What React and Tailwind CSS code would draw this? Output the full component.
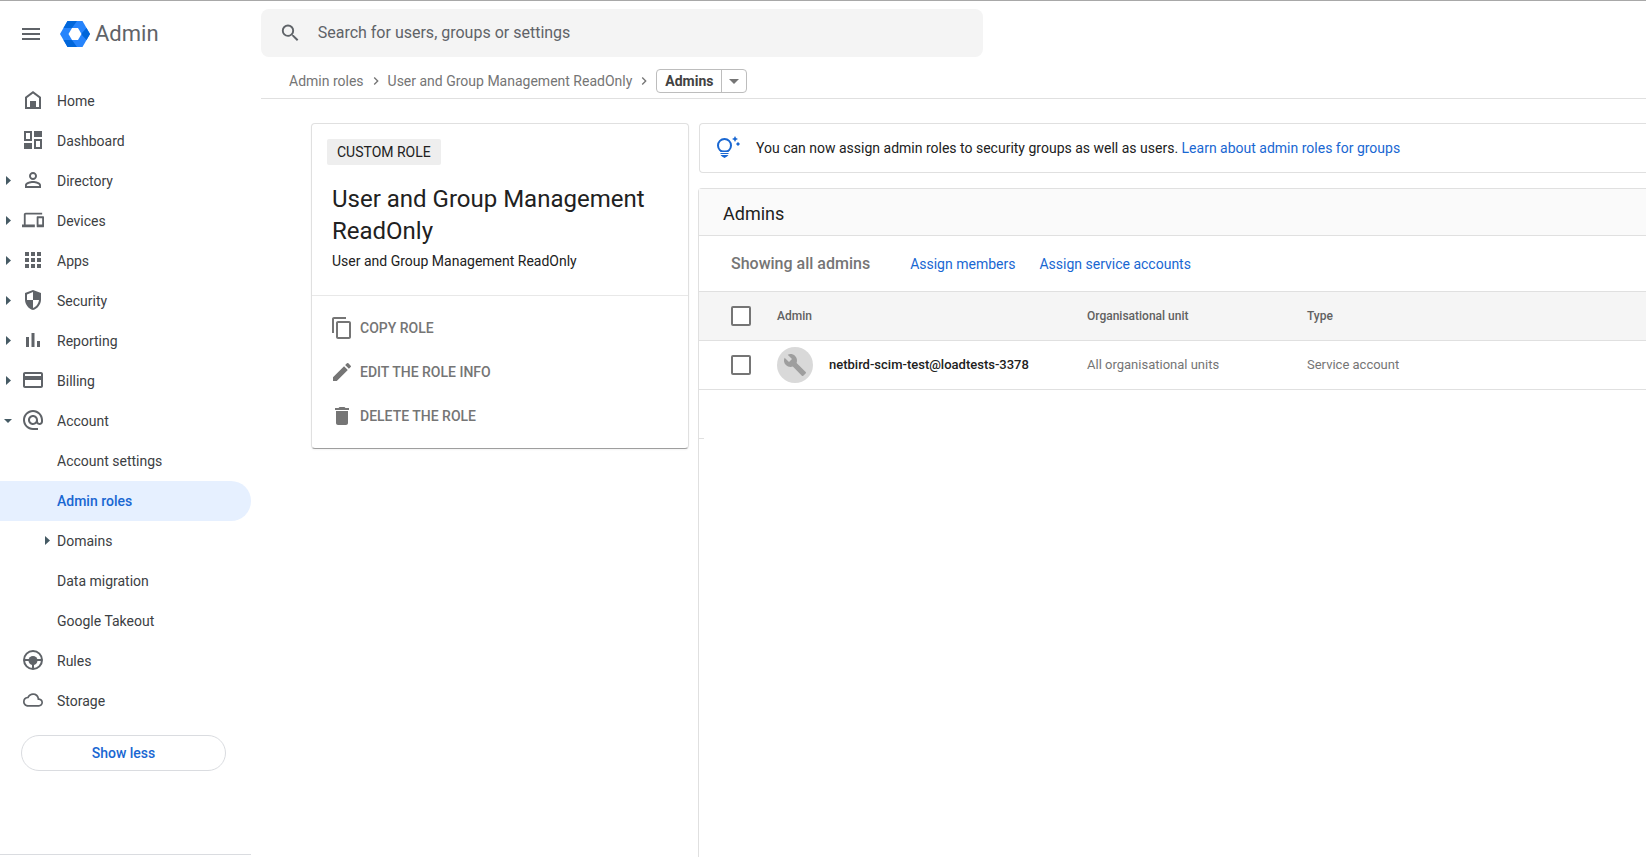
import React, { useState } from "react";
import {
  MdAlternateEmail,
  MdApps,
  MdArrowDropDown,
  MdBuild,
  MdChevronRight,
  MdCloudQueue,
  MdContentCopy,
  MdCreditCard,
  MdDelete,
  MdDevices,
  MdEdit,
  MdMenu,
  MdPersonOutline,
  MdSearch,
} from "react-icons/md";

const HomeIcon = () => (
  <svg width="20" height="20" viewBox="0 0 20 20" fill="currentColor" aria-hidden="true">
    <path d="M10 1 2 7v12h16V7l-8-6Zm6 16H4V8l6-4.500 6 4.500v9Z" />
    <path d="M7 11h6v7H7z" />
  </svg>
);

const DashboardIcon = () => (
  <svg width="20" height="20" viewBox="0 0 20 20" fill="currentColor" aria-hidden="true">
    <path d="M1 1h8v10H1V1Zm2 2v6h4V3H3ZM11 1h8v6h-8zM1 13h8v6H1zM11 9h8v10h-8V9Zm2 2v6h4v-6h-4Z" />
  </svg>
);

const ShieldIcon = () => (
  <svg width="20" height="20" viewBox="0 0 20 20" fill="currentColor" aria-hidden="true">
    <path d="M10 0 2 3v6.5C2 14.3 5.400 18.800 10 20c4.600-1.200 8-5.700 8-10.500V3l-8-3Zm0 2.100V10h6c-.4 3.600-2.900 6.900-6 7.900V10H4V4.400l6-2.300Z" />
  </svg>
);

const ReportIcon = () => (
  <svg width="20" height="20" viewBox="0 0 20 20" fill="currentColor" aria-hidden="true">
    <path d="M3 7h3v10H3zM8.500 3h3v14h-3zM14 11h3v6h-3z" />
  </svg>
);

const RulesIcon = () => (
  <svg width="20" height="20" viewBox="0 0 20 20" fill="none" stroke="currentColor" strokeWidth="2" aria-hidden="true">
    <circle cx="10" cy="10" r="9" />
    <path d="M1 10h18M10 10v9" />
    <circle cx="10" cy="10.5" r="4.5" fill="currentColor" stroke="none" />
  </svg>
);

const AdminLogo = () => (
  <svg width="30" height="28" viewBox="0 0 30 28" aria-hidden="true">
    <path fill="#2684fc" d="M7.500 1h15L30 14l-7.500 13h-15L0 14 7.500 1Z" />
    <path fill="#0066da" d="M7.500 1H17l-5 7H3.500L7.500 1ZM26.500 8 30 14l-3.500 6L21 14l5.500-6ZM3.500 20H12l5 7H7.500l-4-7Z" />
    <path fill="#fff" d="M12 8h6l3.500 6-3.500 6h-6l-3.500-6L12 8Z" />
  </svg>
);

const BulbIcon = () => (
  <svg width="24" height="24" viewBox="0 0 24 24" fill="#1967d2" aria-hidden="true">
    <circle cx="8.5" cy="9.5" r="6.5" fill="none" stroke="#1967d2" strokeWidth="2" />
    <path d="M4.500 14.500h8V18h-8zM4.500 19h8l-1.500 1.500L8.500 22 6 20.500z" />
    <path d="M4 16.500h9" stroke="#fff" strokeWidth="1" />
    <path d="m19 0 1 2 2 1-2 1-1 2-1-2-2-1 2-1zM22 6l2 2-2 2-2-2z" />
  </svg>
);

const NAV_ITEMS = [
  { label: "Home", icon: HomeIcon },
  { label: "Dashboard", icon: DashboardIcon },
  { label: "Directory", icon: MdPersonOutline, size: 24, arrow: true },
  { label: "Devices", icon: MdDevices, size: 22, arrow: true },
  { label: "Apps", icon: MdApps, size: 24, arrow: true },
  { label: "Security", icon: ShieldIcon, arrow: true },
  { label: "Reporting", icon: ReportIcon, arrow: true },
  { label: "Billing", icon: MdCreditCard, size: 24, arrow: true },
  { label: "Account", icon: MdAlternateEmail, size: 24, open: true },
  { label: "Account settings", child: true },
  { label: "Admin roles", child: true, active: true },
  { label: "Domains", child: true, arrow: true },
  { label: "Data migration", child: true },
  { label: "Google Takeout", child: true },
  { label: "Rules", icon: RulesIcon },
  { label: "Storage", icon: MdCloudQueue, size: 20 },
];

const ACTIONS = [
  { label: "COPY ROLE", icon: MdContentCopy },
  { label: "EDIT THE ROLE INFO", icon: MdEdit },
  { label: "DELETE THE ROLE", icon: MdDelete },
];

const ADMINS = [
  {
    name: "netbird-scim-test@loadtests-3378",
    unit: "All organisational units",
    type: "Service account",
  },
];

const NavArrow = ({ open }) => (
  <svg width="8" height="10" viewBox="0 0 8 10" fill="#455a64" aria-hidden="true">
    <path d={open ? "M0 3h8L4 7z" : "M2 0v9l5-4.500z"} />
  </svg>
);

const NavItem = ({ item }) => {
  const Icon = item.icon;
  return (
    <li>
      <a
        href="#"
        aria-current={item.active ? "page" : undefined}
        className={
          item.active
            ? "flex h-10 items-center rounded-r-full bg-[#e6f0ff] text-sm font-medium text-[#1967d2]"
            : "flex h-10 items-center text-sm text-[#3c4043]"
        }
      >
        <span
          className={
            item.child
              ? "flex w-[57px] shrink-0 justify-end pr-1.5"
              : "flex w-[57px] shrink-0 items-center gap-[9px] pl-1"
          }
        >
          {item.child ? (
            item.arrow && <NavArrow />
          ) : (
            <>
              <span className="w-2">{(item.arrow || item.open) && <NavArrow open={item.open} />}</span>
              <span className="flex w-6 shrink-0 justify-center pb-0.5 text-[#5f6368]">
                <Icon size={item.size} />
              </span>
            </>
          )}
        </span>
        {item.label}
      </a>
    </li>
  );
};

const Sidebar = () => (
  <aside className="flex w-[251px] shrink-0 flex-col border-b border-[#dadce0]">
    <div className="flex h-20 items-center pb-3.5 pl-[19px]">
      <button aria-label="Main menu" className="text-[#5f6368]">
        <MdMenu size={24} />
      </button>
      <a href="#" className="ml-[17px] flex items-center gap-[5px] text-[22px] leading-7 text-[#5f6368]">
        <AdminLogo />
        Admin
      </a>
    </div>
    <nav aria-label="Main">
      <ul>
        {NAV_ITEMS.map((item) => (
          <NavItem key={item.label} item={item} />
        ))}
      </ul>
    </nav>
    <button className="mt-3.5 mr-[25px] ml-[21px] h-9 rounded-full border border-[#dadce0] text-sm font-medium text-[#1967d2]">
      Show less
    </button>
  </aside>
);

const Breadcrumbs = () => (
  <nav
    aria-label="Breadcrumb"
    className="mt-2 flex h-[34px] items-center border-b border-[#e0e0e0] pb-px pl-7 text-sm text-[#757575]"
  >
    <a href="#">Admin roles</a>
    <MdChevronRight size={16} className="mx-1" />
    <a href="#">User and Group Management ReadOnly</a>
    <MdChevronRight size={16} className="mx-1" />
    <div className="flex h-6 items-stretch rounded-sm border border-[#bdbdbd]">
      <span className="flex items-center px-2 font-bold text-[#424242]">Admins</span>
      <button aria-label="More pages" className="flex w-[25px] items-center justify-center border-l border-[#bdbdbd]">
        <MdArrowDropDown size={24} />
      </button>
    </div>
  </nav>
);

const RoleCard = () => (
  <section className="w-[378px] shrink-0 self-start rounded-sm border border-[#e0e0e0] border-b-[#9e9e9e] shadow-xs">
    <div className="flex flex-col items-start border-b border-[#e8e8e8] pt-[15px] pl-[15px] pb-6">
      <span className="rounded-xs bg-[#eeeeee] px-2.5 py-[3px] text-sm text-[#212121]">CUSTOM ROLE</span>
      <h1 className="mt-[18px] px-[5px] text-2xl leading-8 text-[#212121]">User and Group Management ReadOnly</h1>
      <p className="mt-1 px-[5px] text-sm text-[#212121]">User and Group Management ReadOnly</p>
    </div>
    <ul className="py-2.5 pl-[18px]">
      {ACTIONS.map(({ label, icon: Icon }) => (
        <li key={label}>
          <button className="flex h-11 items-center gap-1.5 text-sm font-medium text-[#757575]">
            <Icon size={24} />
            {label}
          </button>
        </li>
      ))}
    </ul>
  </section>
);

const Checkbox = ({ label, checked, onChange }) => (
  <input
    type="checkbox"
    aria-label={label}
    checked={checked}
    onChange={onChange}
    className="block size-5 appearance-none rounded-xs border-2 border-[#757575] bg-white checked:bg-[#1967d2]"
  />
);

const AdminsTable = () => {
  const [selected, setSelected] = useState([]);
  const allSelected = selected.length === ADMINS.length;

  const toggle = (name) =>
    setSelected((prev) => (prev.includes(name) ? prev.filter((n) => n !== name) : [...prev, name]));

  return (
    <table className="w-full table-fixed text-left">
      <thead>
        <tr className="h-[49px] border-y border-[#e0e0e0] bg-[#f5f5f5] text-xs text-[#616161]">
          <th className="w-[78px] pl-8">
            <Checkbox
              label="Select all admins"
              checked={allSelected}
              onChange={() => setSelected(allSelected ? [] : ADMINS.map((a) => a.name))}
            />
          </th>
          <th className="w-[310px] font-medium">Admin</th>
          <th className="w-[220px] font-medium">Organisational unit</th>
          <th className="font-medium">Type</th>
        </tr>
      </thead>
      <tbody>
        {ADMINS.map((admin) => (
          <tr key={admin.name} className="h-[49px] border-b border-[#e0e0e0] text-[13px] text-[#757575]">
            <td className="pl-8">
              <Checkbox
                label={admin.name}
                checked={selected.includes(admin.name)}
                onChange={() => toggle(admin.name)}
              />
            </td>
            <td>
              <span className="flex items-center gap-4 font-medium text-[#212121]">
                <span className="flex size-9 items-center justify-center rounded-full bg-[#d9d9d9] text-[#9e9e9e]">
                  <MdBuild size={24} />
                </span>
                {admin.name}
              </span>
            </td>
            <td>{admin.unit}</td>
            <td>{admin.type}</td>
          </tr>
        ))}
      </tbody>
    </table>
  );
};

export default function App() {
  return (
    <div className="flex min-h-screen overflow-x-hidden border-t border-[#a8a8a8] bg-white font-[Roboto,sans-serif]">
      <div className="flex pb-0.5">
        <Sidebar />
      </div>
      <div className="ml-2.5 flex min-w-0 flex-1 flex-col">
        <label className="mt-2 flex h-12 w-full max-w-[722px] items-center gap-4 rounded-lg bg-[#f4f4f4] pl-[18px] text-[#5f6368]">
          <MdSearch size={24} />
          <input
            type="text"
            aria-label="Search"
            placeholder="Search for users, groups or settings"
            className="w-full bg-transparent text-base outline-none placeholder:text-[#5f6368]"
          />
        </label>
        <Breadcrumbs />
        <main className="flex flex-1 gap-[9px] pt-6 pl-[50px]">
          <RoleCard />
          <div className="flex min-w-0 flex-1 flex-col">
            <p className="ml-px flex h-[50px] items-center gap-4 rounded-l-sm border border-r-0 border-[#e0e0e0] pl-4 text-sm text-[#212121]">
              <BulbIcon />
              <span>
                You can now assign admin roles to security groups as well as users.{" "}
                <a href="#" className="text-[#1967d2]">
                  Learn about admin roles for groups
                </a>
              </span>
            </p>
            <section className="mt-[15px] flex-1 rounded-tl-sm border-t border-l border-[#e0e0e0]">
              <h2 className="flex h-[47px] items-center border-b border-[#e0e0e0] bg-[#fafafa] pt-1 pl-6 text-lg text-[#212121]">
                Admins
              </h2>
              <div className="flex h-[55px] items-center gap-6 pl-8 text-sm text-[#1967d2]">
                <h3 className="mr-4 text-base font-medium text-[#757575]">Showing all admins</h3>
                <a href="#">Assign members</a>
                <a href="#">Assign service accounts</a>
              </div>
              <AdminsTable />
              <div className="mt-12 w-[5px] border-t border-[#e0e0e0]" />
            </section>
          </div>
        </main>
      </div>
    </div>
  );
}
